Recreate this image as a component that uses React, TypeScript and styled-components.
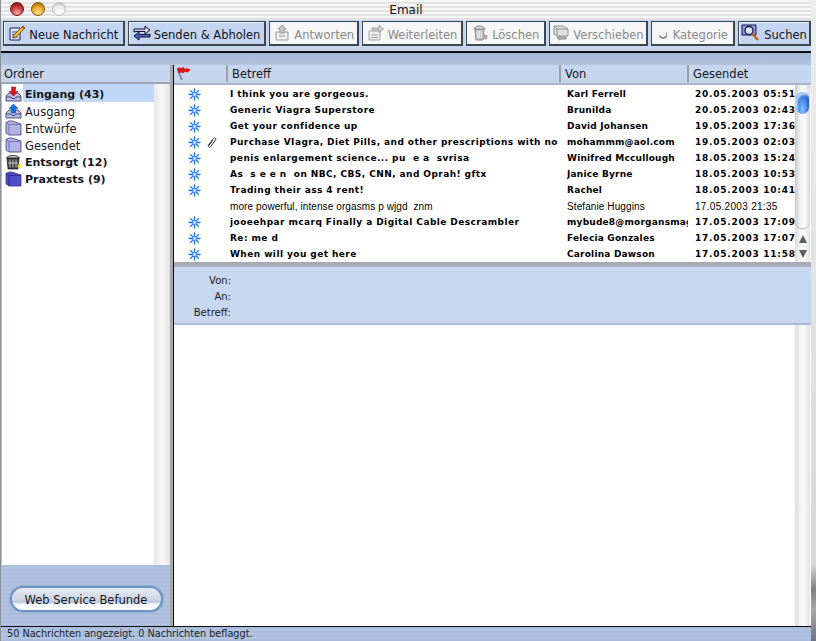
import React from "react";
import styled, { createGlobalStyle } from "styled-components";

const Global = createGlobalStyle`
  html, body { margin: 0; padding: 0; background: #fff; }
  body { width: 816px; height: 641px; overflow: hidden; font-family: "DejaVu Sans", sans-serif; }
  * { box-sizing: border-box; }
`;

const Screen = styled.div`
  width: 816px; height: 641px; display: flex; overflow: hidden;
  background: linear-gradient(180deg, #ececec 0, #d8d8d8 88%, #7d8088 92%, #a8a8ac 95%, #6e7480 100%);
`;
const Win = styled.div`
  width: 811px; height: 641px; display: flex; flex-direction: column; flex: none;
  border-left: 1px solid #8a8f98;
`;
const TitleBar = styled.div`
  height: 20px; position: relative; display: flex; align-items: center; justify-content: center;
  border-top-right-radius: 6px; border-top-left-radius: 6px;
  background: repeating-linear-gradient(180deg, #f6f6f6 0 2px, #e2e2e2 2px 4px);
  font-size: 12px; color: #111;
`;
const Lights = styled.div`
  position: absolute; left: 9px; top: 2px; display: flex; gap: 7px;
`;
const Light = styled.span<{ $c: string; $d: string; $h: string }>`
  width: 14px; height: 14px; border-radius: 50%; display: block;
  border: 1px solid ${p => p.$d};
  background: radial-gradient(circle at 50% 85%, ${p => p.$h} 0, ${p => p.$c} 55%, ${p => p.$d} 100%);
`;
const Toolbar = styled.div`
  height: 33px; display: flex; gap: 3px; padding: 1px 0 0 2px;
  background: #c5d6ee; border-bottom: 2px solid #0b0b0b;
`;
const ToolBtn = styled.div<{ $w: number; $on?: boolean }>`
  width: ${p => p.$w}px; height: 25px; display: flex; align-items: center; justify-content: center; gap: 3px;
  font-size: 11.5px; white-space: nowrap;
  color: ${p => (p.$on ? "#10131a" : "#8a8a8a")};
  background: ${p => (p.$on ? "#c3d5f0" : "#f6f6f6")};
  border: 1px solid #3f4650; border-right-width: 2px; border-bottom-width: 2px;
  box-shadow: inset 1px 1px 0 #eef3fb;
`;
const ToolLabel = styled.span`
  padding-top: 4px;
`;
const Band = styled.div`
  height: 12px; background: linear-gradient(180deg, #a3b6d6, #adbfdc 60%, #b4c5e0);
`;
const Main = styled.div`
  flex: 1; display: flex; min-height: 0; background: #adbfdc;
`;
const Side = styled.div`
  width: 169px; flex: none; display: flex; flex-direction: column;
  background: repeating-linear-gradient(180deg, #a9bcdb 0 2px, #b2c3df 2px 4px);
`;
const SideHead = styled.div`
  height: 19px; background: #c5d6ee; border-bottom: 2px solid #9aa5b8;
  font-size: 11.5px; color: #14181f; padding: 2px 0 0 3px; line-height: 15px;
`;
const SideList = styled.div`
  height: 481px; display: flex; background: #fff; margin-left: 1px;
`;
const FolderCol = styled.div`
  width: 152px; padding-top: 2px;
`;
const SideTrack = styled.div`
  width: 16px; background: linear-gradient(90deg, #e6e6e6, #f8f8f8 50%, #e4e4e4);
`;
const Folder = styled.div<{ $b?: boolean }>`
  height: 17px; display: flex; align-items: flex-start; padding-left: 3px; gap: 1px;
  font-size: ${p => (p.$b ? "11px" : "11.5px")}; font-weight: ${p => (p.$b ? 700 : 400)}; color: #15181e;
  white-space: nowrap;
`;
const FolderName = styled.span<{ $sel?: boolean }>`
  flex: 1; height: 18px; margin-top: -2px; line-height: 22px; padding-left: 2px;
  background: ${p => (p.$sel ? "#c0d8f8" : "transparent")};
`;
const SideFoot = styled.div`
  flex: 1; display: flex; align-items: center; justify-content: center; padding: 6px 7px 0 8px;
`;
const Aqua = styled.div`
  width: 153px; height: 26px; border-radius: 13px; text-align: center; font-size: 11.5px; line-height: 25px; color: #15181e;
  background: linear-gradient(180deg, #e4e8f0 0, #ced6e4 55%, #b4c6e2 62%, #f4f7fb 74%, #ffffff 100%);
  border: 2px solid #6f93c4;
  box-shadow: 0 0 2px #5f86bf;
`;
const Sash = styled.div`
  width: 4px; flex: none; background: linear-gradient(90deg, #a8a8a8 0 3px, #0d0d0d 3px 4px);
`;
const Right = styled.div`
  flex: 1; display: flex; flex-direction: column; min-width: 0; background: #fff;
`;
const ColHead = styled.div`
  height: 20px; flex: none; display: grid; grid-template-columns: 52px 333px 128px 1fr;
  background: #c5d6ee; border-bottom: 2px solid #a7b6cd;
  font-size: 11.5px; color: #14181f;
`;
const ColCell = styled.div<{ $first?: boolean }>`
  display: flex; align-items: center; padding-left: ${p => (p.$first ? "2px" : "4px")};
  height: 17px;
  border-left: ${p => (p.$first ? "none" : "2px solid #9aa0a8")};
`;
const ListWrap = styled.div`
  height: 177px; flex: none; display: flex;
`;
const Rows = styled.div`
  width: 621px; overflow: hidden; padding-top: 1px;
`;
const MailRow = styled.div<{ $read?: boolean }>`
  height: 16px; display: grid; grid-template-columns: 56px 329px 8px 121px 7px 100px; align-items: center;
  font-family: ${p => (p.$read ? '"Liberation Sans"' : '"DejaVu Sans"')}, sans-serif;
  font-size: ${p => (p.$read ? "10px" : "9px")};
  font-weight: ${p => (p.$read ? 400 : 700)};
  letter-spacing: ${p => (p.$read ? "0.1px" : "0.43px")};
  color: #000;
`;
const Marks = styled.div`
  display: flex; align-items: center; gap: 4px; padding-left: 14px;
`;
const MarkSlot = styled.span`
  width: 13px; height: 13px; display: block; flex: none;
`;
const Clip = styled.span`
  overflow: hidden; white-space: pre;
`;
const Sender = styled(Clip)<{ $read?: boolean }>`
  letter-spacing: ${p => (p.$read ? "0.1px" : "0.2px")};
`;
const Sent = styled(Clip)<{ $read?: boolean }>`
  letter-spacing: ${p => (p.$read ? "0.3px" : "0.75px")};
`;
const Track = styled.div`
  width: 15px; flex: none; display: flex; flex-direction: column;
  background: linear-gradient(90deg, #dcdcdc, #f6f6f6 40%, #fafafa 60%, #e2e2e2);
`;
const Groove = styled.div`
  flex: 1; position: relative; border-bottom-left-radius: 7px; border-bottom-right-radius: 7px;
  background: linear-gradient(90deg, #c9c9c9, #f2f2f2 35%, #fafafa 65%, #d8d8d8);
  box-shadow: 0 1px 1px #aaa;
`;
const Thumb = styled.div`
  position: absolute; left: 1px; top: 7px; width: 13px; height: 22px; border-radius: 7px;
  background: radial-gradient(ellipse at 50% 80%, #8cc0ff 0, #3478e0 55%, #123f98 100%);
  box-shadow: inset 2px 3px 2px #b4d2ff;
`;
const Arrows = styled.div`
  height: 34px; flex: none; padding-top: 3px;
  display: flex; flex-direction: column; align-items: center; justify-content: space-around;
`;
const ArrowUp = styled.span`
  width: 0; height: 0; border-left: 4px solid transparent; border-right: 4px solid transparent; border-bottom: 8px solid #5a5f66;
`;
const ArrowDown = styled.span`
  width: 0; height: 0; border-left: 4px solid transparent; border-right: 4px solid transparent; border-top: 8px solid #5a5f66;
`;
const Splitter = styled.div`
  height: 5px; flex: none; background: linear-gradient(180deg, #a6a8ae, #adb2bc);
`;
const Preview = styled.div`
  height: 58px; flex: none; background: #c6d7ef; padding-top: 5px;
  border-bottom: 2px solid #a9bbd8;
`;
const PrevRow = styled.div`
  height: 16px; width: 57px; text-align: right; font-size: 10px; line-height: 17px; color: #222;
`;
const BodyArea = styled.div`
  flex: 1; display: flex; justify-content: flex-end; min-height: 0; padding-right: 1px;
`;
const Status = styled.div`
  height: 15px; flex: none; border-top: 1px solid #0c0c0c; font-size: 9.7px; line-height: 14px; color: #20242c;
  padding-left: 6px; background: repeating-linear-gradient(180deg, #a9bcdb 0 2px, #b2c3df 2px 4px);
`;

const Star = () => (
  <svg width="13" height="13" viewBox="0 0 13 13">
    <g stroke="#1a6ff0" strokeWidth="1.3" strokeLinecap="round">
      <path d="M6.500 1v11M1 6.500h11M2.600 2.600l7.800 7.800M10.400 2.600l-7.800 7.800" />
    </g>
    <circle cx="6.500" cy="6.500" r="2" fill="#bfe0ff" stroke="#2a7df2" strokeWidth=".6" />
  </svg>
);
const PaperClip = () => (
  <svg width="13" height="13" viewBox="0 0 13 13" fill="none">
    <path d="M3 9.500l5.500-7c1-1.200 3-.2 2.200 1.300L5.500 10.800c-.9 1.100-2.500.2-1.900-1L8 4" stroke="#333" strokeWidth="1" />
  </svg>
);
const Flag = () => (
  <svg width="16" height="14" viewBox="0 0 16 14">
    <path d="M1.500 2l4.500 11" stroke="#7a7f95" strokeWidth="1.800" />
    <path d="M1 2C2.500 0 4 .5 5.500 1L7.500 0l1.500 2c1.500-1 3-1 5.500 1l-3 2.500C10 4.500 8.500 4.500 7 6.500 6 5 4.500 5 3 6.500z" fill="#d9141b" />
  </svg>
);

const Folder3D = ({ dark }: { dark?: boolean }) => (
  <svg width="17" height="16" viewBox="0 0 17 16">
    <path d="M1 2.500L4 1h3l9 3v11H4L1 13z" fill={dark ? "#4d4ec8" : "#b3b4e6"} stroke="#3a3a70" strokeWidth=".8" />
    <path d="M1 2.500L4 4.500V15M4 4.500h12" fill="none" stroke={dark ? "#26268a" : "#6c6cb0"} strokeWidth=".9" />
  </svg>
);
const Tray = ({ up }: { up?: boolean }) => (
  <svg width="17" height="16" viewBox="0 0 17 16">
    <path d="M1 10l3-3h9l3 3v5H1z" fill="#b9bce8" stroke="#30305e" strokeWidth=".8" />
    <path d="M1 11h5l1 1.500h3l1-1.500h5" fill="none" stroke="#30305e" strokeWidth=".8" />
    {up ? (
      <path d="M8.500 1L13 5.500h-2.500V10h-4V5.500H4z" fill="#1472e0" stroke="#0a3f90" strokeWidth=".5" />
    ) : (
      <path d="M8.500 10L13 5.500h-2.500V1h-4v4.500H4z" fill="#e0141a" stroke="#8a0a0a" strokeWidth=".5" />
    )}
  </svg>
);
const Trash = () => (
  <svg width="17" height="16" viewBox="0 0 17 16">
    <path d="M2 4h12l-1 11H3z" fill="#3e3e3e" stroke="#111" strokeWidth=".7" />
    <path d="M5 5.500v8M8 5.500v8M11 5.500v8M3 9h10" stroke="#ddd" strokeWidth=".8" />
    <path d="M1.500 4c1-3.500 12-3.500 13 0z" fill="#bdbdbd" stroke="#111" strokeWidth=".7" />
    <circle cx="14.500" cy="12" r="2" fill="#f6e23a" />
  </svg>
);

const NewIcon = () => (
  <svg width="18" height="18" viewBox="0 0 18 18">
    <path d="M2 4h10v12H2z" fill="#dfe0f6" stroke="#23234f" strokeWidth="1" />
    <path d="M4 8h6M4 10.500h6M4 13h6" stroke="#4848a0" strokeWidth="1" />
    <path d="M6 11l9-9 2 2-9 9-3 1z" fill="#f2c12e" stroke="#5a3b00" strokeWidth=".8" />
    <path d="M14.500 2.500l2 2" stroke="#d9141b" strokeWidth="1.500" />
  </svg>
);
const SyncIcon = () => (
  <svg width="18" height="18" viewBox="0 0 18 18">
    <path d="M1 8V5h11V2l5 4-5 4V7.500H3z" fill="#c8cdf0" stroke="#11122f" strokeWidth="1" />
    <path d="M17 10v3H6v3l-5-4 5-4v2.500h9z" fill="#5560c8" stroke="#11122f" strokeWidth="1" />
  </svg>
);
const ReplyIcon = () => (
  <svg width="18" height="18" viewBox="0 0 18 18" fill="none" stroke="#9a9a9a">
    <path d="M3 8h12v8H3z" fill="#eee" />
    <path d="M9 1l4 4h-2v4H7V5H5z" fill="#c8c8c8" />
    <path d="M6 12h6" />
  </svg>
);
const ForwardIcon = () => (
  <svg width="18" height="18" viewBox="0 0 18 18" fill="none" stroke="#a0a0a0">
    <path d="M2 7h11v9H2z" fill="#f0f0f0" />
    <path d="M5 4h7V1.500L16.500 5 12 8.500V6H5z" fill="#d2d2d2" />
    <path d="M4 11h7M4 13.500h7" />
  </svg>
);
const TrashGrey = () => (
  <svg width="18" height="18" viewBox="0 0 18 18" stroke="#8a8a8a">
    <path d="M4 5h9l-1 11H5z" fill="#c4c4c4" />
    <path d="M6.500 7v7M8.500 7v7M10.500 7v7" stroke="#f2f2f2" />
    <path d="M3 5c1-4 10-4 11 0z" fill="#dadada" />
    <circle cx="14" cy="13" r="2.500" fill="#a8a8a8" stroke="none" />
  </svg>
);
const MoveIcon = () => (
  <svg width="18" height="18" viewBox="0 0 18 18" stroke="#909090">
    <path d="M2 2h9l5 3v7H5l-3-2z" fill="#e0e0e0" />
    <path d="M2 2l3 3v7M5 5h11" fill="none" />
    <path d="M8 12v4l-3-2zM8 13h6v2H8" fill="#bbb" />
  </svg>
);
const CatIcon = () => (
  <svg width="12" height="18" viewBox="0 0 12 18" fill="none">
    <path d="M1.500 11.500c1 3 5 3.500 7 .5" stroke="#7b7b7b" strokeWidth="1.400" />
    <path d="M8.500 8.500v3.500" stroke="#9a9a9a" strokeWidth="1" />
  </svg>
);
const SearchIcon = () => (
  <svg width="20" height="18" viewBox="0 0 20 18">
    <path d="M1 1h14v10H1z" fill="#8f93e8" stroke="#16163f" strokeWidth="1" />
    <circle cx="8" cy="6.500" r="4" fill="#dfe9fb" stroke="#16163f" strokeWidth="1.300" />
    <path d="M11 9.500l6 6.500" stroke="#b5651d" strokeWidth="2.400" />
  </svg>
);

const buttons: { label: string; w: number; on?: boolean; icon: React.ReactNode }[] = [
  { label: "Neue Nachricht", w: 122, on: true, icon: <NewIcon /> },
  { label: "Senden & Abholen", w: 139, on: true, icon: <SyncIcon /> },
  { label: "Antworten", w: 90, icon: <ReplyIcon /> },
  { label: "Weiterleiten", w: 101, icon: <ForwardIcon /> },
  { label: "Löschen", w: 80, icon: <TrashGrey /> },
  { label: "Verschieben", w: 100, icon: <MoveIcon /> },
  { label: "Kategorie", w: 84, icon: <CatIcon /> },
  { label: "Suchen", w: 73, on: true, icon: <SearchIcon /> },
];

const folders: { name: string; bold?: boolean; sel?: boolean; icon: React.ReactNode }[] = [
  { name: "Eingang (43)", bold: true, sel: true, icon: <Tray /> },
  { name: "Ausgang", icon: <Tray up /> },
  { name: "Entwürfe", icon: <Folder3D /> },
  { name: "Gesendet", icon: <Folder3D /> },
  { name: "Entsorgt (12)", bold: true, icon: <Trash /> },
  { name: "Praxtests (9)", bold: true, icon: <Folder3D dark /> },
];

const mails: { s: string; f: string; d: string; clip?: boolean; read?: boolean }[] = [
  { s: "I think you are gorgeous.", f: "Karl Ferrell", d: "20.05.2003 05:51" },
  { s: "Generic Viagra Superstore", f: "Brunilda", d: "20.05.2003 02:43" },
  { s: "Get your confidence up", f: "David Johansen", d: "19.05.2003 17:36" },
  { s: "Purchase VIagra, Diet Pills, and other prescriptions with no", f: "mohammm@aol.com", d: "19.05.2003 02:03", clip: true },
  { s: "penis enlargement science... pu  e a  svrisa", f: "Winifred Mccullough", d: "18.05.2003 15:24" },
  { s: "As  s e e n  on NBC, CBS, CNN, and Oprah! gftx", f: "Janice Byrne", d: "18.05.2003 10:53" },
  { s: "Trading their ass 4 rent!", f: "Rachel", d: "18.05.2003 10:41" },
  { s: "more powerful, intense orgasms p wjgd  znm", f: "Stefanie Huggins", d: "17.05.2003 21:35", read: true },
  { s: "jooeehpar mcarq Finally a Digital Cable Descrambler", f: "mybude8@morgansmag", d: "17.05.2003 17:09" },
  { s: "Re: me d", f: "Felecia Gonzales", d: "17.05.2003 17:07" },
  { s: "When will you get here", f: "Carolina Dawson", d: "17.05.2003 11:58" },
];

export default function App() {
  return (
    <Screen>
      <Global />
      <Win>
        <TitleBar>
          <Lights>
            <Light $c="#c83436" $d="#6e1215" $h="#f4b0a8" />
            <Light $c="#e8a428" $d="#8c5208" $h="#fbe6a0" />
            <Light $c="#ececec" $d="#bcbcbc" $h="#ffffff" />
          </Lights>
          Email
        </TitleBar>
        <Toolbar>
          {buttons.map(b => (
            <ToolBtn key={b.label} $w={b.w} $on={b.on}>
              {b.icon}
              <ToolLabel>{b.label}</ToolLabel>
            </ToolBtn>
          ))}
        </Toolbar>
        <Band />
        <Main>
          <Side>
            <SideHead>Ordner</SideHead>
            <SideList>
              <FolderCol>
                {folders.map(f => (
                  <Folder key={f.name} $b={f.bold}>
                    {f.icon}
                    <FolderName $sel={f.sel}>{f.name}</FolderName>
                  </Folder>
                ))}
              </FolderCol>
              <SideTrack />
            </SideList>
            <SideFoot>
              <Aqua>Web Service Befunde</Aqua>
            </SideFoot>
          </Side>
          <Sash />
          <Right>
            <ColHead>
              <ColCell $first>
                <Flag />
              </ColCell>
              <ColCell>Betreff</ColCell>
              <ColCell>Von</ColCell>
              <ColCell>Gesendet</ColCell>
            </ColHead>
            <ListWrap>
              <Rows>
                {mails.map(m => (
                  <MailRow key={m.s} $read={m.read}>
                    <Marks>
                      <MarkSlot>{!m.read && <Star />}</MarkSlot>
                      {m.clip && <MarkSlot><PaperClip /></MarkSlot>}
                    </Marks>
                    <Clip>{m.s}</Clip>
                    <span />
                    <Sender $read={m.read}>{m.f}</Sender>
                    <span />
                    <Sent $read={m.read}>{m.d}</Sent>
                  </MailRow>
                ))}
              </Rows>
              <Track>
                <Groove>
                  <Thumb />
                </Groove>
                <Arrows>
                  <ArrowUp />
                  <ArrowDown />
                </Arrows>
              </Track>
            </ListWrap>
            <Splitter />
            <Preview>
              <PrevRow>Von:</PrevRow>
              <PrevRow>An:</PrevRow>
              <PrevRow>Betreff:</PrevRow>
            </Preview>
            <BodyArea>
              <Track />
            </BodyArea>
          </Right>
        </Main>
        <Status>50 Nachrichten angezeigt. 0 Nachrichten beflaggt.</Status>
      </Win>
    </Screen>
  );
}
